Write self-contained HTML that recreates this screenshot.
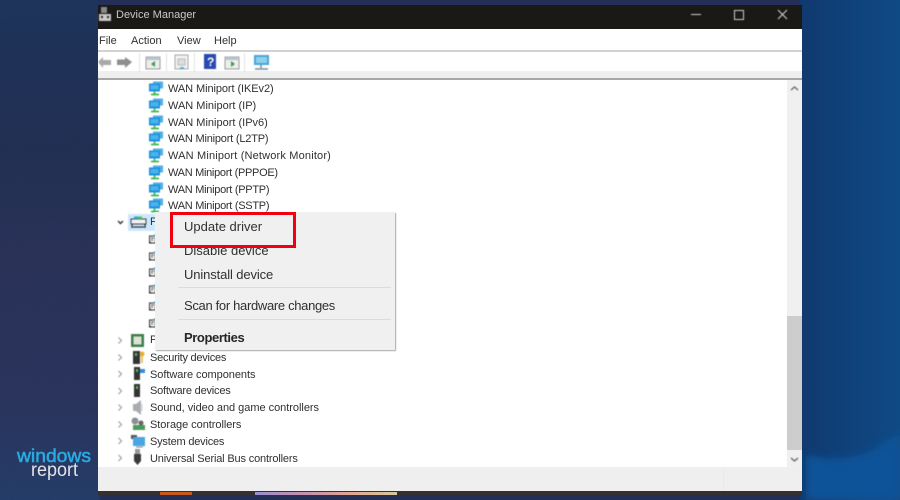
<!DOCTYPE html>
<html><head><meta charset="utf-8"><style>
html,body{margin:0;padding:0}
body{width:900px;height:500px;overflow:hidden;position:relative;background:#232f56;font-family:"Liberation Sans",sans-serif}
.abs,.t,.r,.m{position:absolute}
.t{white-space:nowrap;font-size:11px;color:#303030;line-height:14px;left:150px;filter:blur(.3px)}
.w{left:168px}
.m{white-space:nowrap;font-size:13px;color:#303030;line-height:16px;left:184px;filter:blur(.3px)}
svg{position:absolute;left:0;top:0}
</style></head><body>
<svg width="900" height="500" viewBox="0 0 900 500">
<defs>
<linearGradient id="l" x1="0" y1="0" x2="0" y2="1"><stop offset="0" stop-color="#1a3258"/><stop offset=".1" stop-color="#1b2f55"/><stop offset=".3" stop-color="#1e2c50"/><stop offset=".5" stop-color="#262f55"/><stop offset=".8" stop-color="#263159"/><stop offset="1" stop-color="#213a66"/></linearGradient>
<linearGradient id="rr" x1="0" y1="0" x2="1" y2="0"><stop offset="0" stop-color="#10396f"/><stop offset="1" stop-color="#0f4a85"/></linearGradient>
<filter id="b"><feGaussianBlur stdDeviation="4"/></filter>
<filter id="n" x="0" y="0" width="100%" height="100%"><feTurbulence type="fractalNoise" baseFrequency="1.4" numOctaves="1" seed="4"/><feColorMatrix values="0 0 0 0 .4  0 0 0 0 .3  0 0 0 0 .5  0 0 0 .5 -.15"/></filter>
</defs>
<rect x="0" y="0" width="100" height="500" fill="url(#l)"/>
<rect x="800" y="0" width="100" height="500" fill="url(#rr)"/>
<path d="M806 454Q835 464 870 452L900 432V500H806Z" fill="#0f5299" filter="url(#b)"/>
<rect x="0" y="0" width="98" height="500" filter="url(#n)" opacity=".3"/>
</svg>

<div class="abs" style="left:98px;top:5px;width:704px;height:24px;background:#1a1916"></div>
<div class="abs" style="left:98px;top:29px;width:704px;height:21px;background:#fff"></div>
<div class="abs" style="left:98px;top:50px;width:704px;height:2px;background:#d2d2d2"></div>
<div class="abs" style="left:98px;top:52px;width:704px;height:19px;background:#fff"></div>
<div class="abs" style="left:98px;top:71px;width:704px;height:7px;background:#efefef"></div>
<div class="abs" style="left:98px;top:78px;width:704px;height:2px;background:#a6a6a6"></div>
<div class="abs" style="left:98px;top:80px;width:689px;height:387px;background:#fff"></div>
<div class="abs" style="left:787px;top:80px;width:15px;height:387px;background:#f0f0f0"></div>
<div class="abs" style="left:787px;top:316px;width:15px;height:134px;background:#cdcdcd"></div>
<div class="abs" style="left:98px;top:467px;width:704px;height:24px;background:#efefef"></div>
<div class="abs" style="left:723px;top:470px;width:1px;height:20px;background:#e9e9e9"></div>
<div class="abs" style="left:98px;top:491px;width:704px;height:4px;background:#33302f"></div>
<div class="abs" style="left:160px;top:492px;width:32px;height:3px;background:#c8591f"></div>
<div class="abs" style="left:255px;top:492px;width:142px;height:3px;background:linear-gradient(90deg,#9a8fd0,#c58fb0,#e0a58f,#d8c79a)"></div>

<svg width="900" height="500" viewBox="0 0 900 500" style="filter:blur(.4px)">
<defs><g id="w"><rect x="4" y="-6.500" width="10" height="7" fill="#4fb0e6"/><rect x="0" y="-4.500" width="11" height="8" fill="#1c8fdc"/><rect x="1.500" y="-3" width="8" height="4.500" fill="#4bb2ea"/><path d="M5.500 3.500V6M2 6.500H10" stroke="#3fb54a" stroke-width="1.700"/></g>
<g id="c"><rect x="0.500" y="-3" width="6" height="7" fill="#f4f4f4" stroke="#333" stroke-width="1"/><path d="M2 -1H5M2 1H4" stroke="#555" stroke-width=".9"/><rect x="4.500" y="-4.500" width="2.500" height="2" fill="#4aa6d8"/><rect x="0" y="3" width="2" height="1.500" fill="#222"/></g></defs>
<!-- title icon -->
<rect x="101" y="7" width="6" height="6" fill="#8a8a8a"/><rect x="99" y="14" width="12" height="7" fill="#c8c8c8"/><rect x="101" y="16" width="2" height="2" fill="#222"/><rect x="107" y="16" width="2" height="2" fill="#222"/>
<!-- window controls -->
<path d="M691 14.500H701" stroke="#cfcfcf"/><rect x="734.500" y="10.500" width="9" height="9" fill="none" stroke="#cfcfcf"/><path d="M778 10L787 19M787 10L778 19" stroke="#cfcfcf" stroke-width="1.100"/>
<!-- toolbar -->
<path d="M98 62L103 57V60H111V65H103V68Z" fill="#a9a9a9"/><path d="M132 62L125 57V59.500H117V65H125V68Z" fill="#8f8f8f"/>
<path d="M139.500 53V72M166.500 53V72M194.500 53V72M244.500 53V72" stroke="#e2e2e2"/>
<rect x="146" y="57" width="14" height="12" fill="#eee" stroke="#9a9a9a"/><rect x="146" y="57" width="14" height="3" fill="#b9c3cc"/><path d="M155 61V67L151 64Z" fill="#3c9a49"/>
<rect x="175" y="55" width="13" height="14" fill="#f2f2f2" stroke="#a8a8a8"/><rect x="178" y="59" width="7" height="6" fill="#ddd" stroke="#bbb"/><rect x="180" y="67" width="4" height="2" fill="#5ab0dc"/>
<rect x="204" y="54" width="12" height="15" fill="#2a49ad"/><text x="207" y="66" font-size="12" font-weight="bold" fill="#fff" font-family="Liberation Sans">?</text>
<rect x="225" y="57" width="14" height="12" fill="#eee" stroke="#9a9a9a"/><rect x="225" y="57" width="14" height="3" fill="#b9c3cc"/><path d="M231 61V67L235 64Z" fill="#3c9a49"/>
<rect x="254" y="55" width="15" height="10" fill="#4aa6d8"/><rect x="256" y="57" width="11" height="6" fill="#8ed0ee"/><path d="M261 65V68M255 69H268" stroke="#7a8a96" stroke-width="1.500"/>
<!-- scroll arrows -->
<path d="M791 90L794.500 87L798 90" fill="none" stroke="#666" stroke-width="1.300"/><path d="M791 458L794.500 461L798 458" fill="none" stroke="#666" stroke-width="1.300"/>
<!-- selected root -->
<rect x="128" y="214" width="27" height="17" fill="#cce8ff"/>
<path d="M118 221L120.500 223.500L123 221" fill="none" stroke="#333" stroke-width="1.400"/>
<rect x="131" y="219" width="15" height="5" fill="#f2f2f2" stroke="#444"/><rect x="134" y="216.500" width="4" height="2.500" fill="#2fa6d8"/><rect x="138" y="216.500" width="4" height="2.500" fill="#4fc05a"/><path d="M132 224V228M145 224V228M133 227H144" stroke="#333" stroke-width="1.300"/>
<!-- collapsed chevrons -->
<g fill="none" stroke="#9a9a9a" stroke-width="1.100"><path d="M118.500 337.500L121.500 340.500L118.500 343.500"/><path d="M118.500 354.500L121.500 357.500L118.500 360.500"/><path d="M118.500 371L121.500 374L118.500 377"/><path d="M118.500 388L121.500 391L118.500 394"/><path d="M118.500 404.500L121.500 407.500L118.500 410.500"/><path d="M118.500 421.500L121.500 424.500L118.500 427.500"/><path d="M118.500 438L121.500 441L118.500 444"/><path d="M118.500 455L121.500 458L118.500 461"/></g>
<!-- network icons -->
<use href="#w" x="149" y="88"/><use href="#w" x="149" y="105"/><use href="#w" x="149" y="122"/><use href="#w" x="149" y="138"/><use href="#w" x="149" y="155"/><use href="#w" x="149" y="172"/><use href="#w" x="149" y="189"/><use href="#w" x="149" y="205"/>
<use href="#c" x="149" y="239"/><use href="#c" x="149" y="256"/><use href="#c" x="149" y="272"/><use href="#c" x="149" y="289"/><use href="#c" x="149" y="306"/><use href="#c" x="149" y="323"/>
<!-- category icons -->
<rect x="131" y="334" width="13" height="13" fill="#3f7f4a"/><rect x="133.500" y="336.500" width="8" height="8" fill="#dde2d6"/>
<rect x="133" y="351" width="7" height="13" fill="#333"/><rect x="135" y="353" width="2" height="3" fill="#4cc060"/><circle cx="142" cy="354" r="2.500" fill="#e8b030"/><path d="M142 356V363" stroke="#e8b030" stroke-width="1.500"/>
<rect x="134" y="367" width="6" height="13" fill="#333"/><rect x="136" y="369" width="2" height="3" fill="#4cc060"/><path d="M140 369H145V373H140Z" fill="#2f8fe0"/>
<rect x="134" y="384" width="6" height="13" fill="#333"/><rect x="136" y="386" width="2" height="3" fill="#4cc060"/>
<path d="M133 404H136L141 400V415L136 411H133Z" fill="#a8adb2"/><path d="M142 404V411" stroke="#ccc"/>
<circle cx="135" cy="421" r="3.500" fill="#8a9096"/><rect x="133" y="425" width="12" height="5" fill="#4a9a5a"/><circle cx="141" cy="423" r="2.500" fill="#666"/>
<rect x="131" y="435" width="6" height="4" fill="#555"/><rect x="133" y="437" width="12" height="9" fill="#4aa6e0"/><path d="M136 447H143" stroke="#888"/>
<rect x="135" y="449" width="5" height="5" fill="#999"/><path d="M134 454H141V461L137.500 465L134 461Z" fill="#3a3a3a"/>
</svg>

<div class="abs" style="left:116px;top:8px;font-size:11px;color:#c9c9c9;line-height:15px;white-space:nowrap;filter:blur(.3px)">Device Manager</div>
<div class="t" style="left:99px;top:34px">File</div>
<div class="t" style="left:131px;top:34px">Action</div>
<div class="t" style="left:177px;top:34px">View</div>
<div class="t" style="left:214px;top:34px">Help</div>

<div class="t w" style="top:82px;letter-spacing:-.08px">WAN Miniport (IKEv2)</div>
<div class="t w" style="top:99px">WAN Miniport (IP)</div>
<div class="t w" style="top:116px">WAN Miniport (IPv6)</div>
<div class="t w" style="top:132px;letter-spacing:-.2px">WAN Miniport (L2TP)</div>
<div class="t w" style="top:149px;letter-spacing:.17px">WAN Miniport (Network Monitor)</div>
<div class="t w" style="top:166px;letter-spacing:-.3px">WAN Miniport (PPPOE)</div>
<div class="t w" style="top:183px;letter-spacing:-.28px">WAN Miniport (PPTP)</div>
<div class="t w" style="top:199px;letter-spacing:-.28px">WAN Miniport (SSTP)</div>
<div class="t" style="top:215px">P</div>
<div class="t" style="top:333px">P</div>
<div class="t" style="top:351px;letter-spacing:-.25px">Security devices</div>
<div class="t" style="top:368px;letter-spacing:-.05px">Software components</div>
<div class="t" style="top:384px;letter-spacing:-.2px">Software devices</div>
<div class="t" style="top:401px;letter-spacing:-.03px">Sound, video and game controllers</div>
<div class="t" style="top:418px;letter-spacing:-.05px">Storage controllers</div>
<div class="t" style="top:435px;letter-spacing:-.2px">System devices</div>
<div class="t" style="top:452px;letter-spacing:-.16px">Universal Serial Bus controllers</div>

<!-- context menu -->
<div class="abs" style="left:155px;top:212px;width:240px;height:138px;background:#f0f0f0;box-shadow:1px 1px 1px #a8a8a8"></div>
<div class="abs" style="left:178px;top:287px;width:213px;height:1px;background:#dcdcdc"></div>
<div class="abs" style="left:178px;top:319px;width:213px;height:1px;background:#dcdcdc"></div>
<div class="m" style="top:243px">Disable device</div>
<div class="m" style="top:267px;letter-spacing:-.12px">Uninstall device</div>
<div class="m" style="top:298px;letter-spacing:-.32px">Scan for hardware changes</div>
<div class="m" style="top:330px;font-weight:bold;color:#262626;letter-spacing:-.4px">Properties</div>
<div class="abs" style="left:170px;top:212px;width:120px;height:30px;border:3.500px solid #f2000f;background:#f0f0f0"></div>
<div class="m" style="top:219px">Update driver</div>

<!-- logo -->
<svg width="900" height="500" viewBox="0 0 900 500" style="filter:blur(.3px)">
<text x="17" y="462" font-size="18" fill="#29abe2" stroke="#29abe2" stroke-width=".5" font-family="Liberation Sans" textLength="74" lengthAdjust="spacingAndGlyphs">windows</text>
<text x="31" y="476" font-size="19" fill="#e4e4e8" font-family="Liberation Sans" textLength="47" lengthAdjust="spacingAndGlyphs">report</text>
</svg>
</body></html>
